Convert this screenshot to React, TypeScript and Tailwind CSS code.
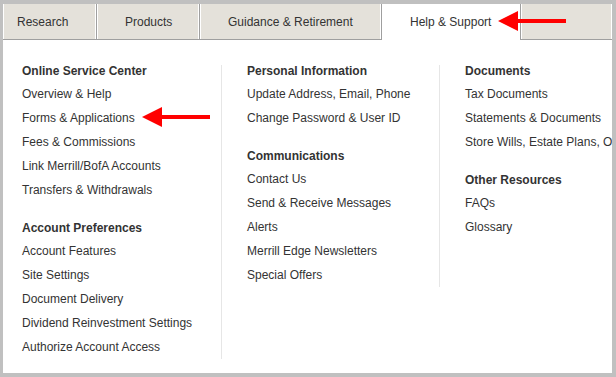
const tabs = [
  { label: 'Research', w: 'w-[93px] pl-[14px]', active: false },
  { label: 'Products', w: 'w-[103px] pl-[28px] border-l', active: false },
  { label: 'Guidance & Retirement', w: 'w-[182px] pl-[28px] border-l', active: false },
  { label: 'Help & Support', w: 'w-[139px] pl-[28px] border-l', active: true },
  { label: '', w: 'flex-1 border-l', active: false },
];

const columns = [
  {
    className: 'w-[219px] shrink-0 pl-[19px] border-r',
    sections: [
      {
        title: 'Online Service Center',
        links: ['Overview & Help', 'Forms & Applications', 'Fees & Commissions', 'Link Merrill/BofA Accounts', 'Transfers & Withdrawals'],
      },
      {
        title: 'Account Preferences',
        links: ['Account Features', 'Site Settings', 'Document Delivery', 'Dividend Reinvestment Settings', 'Authorize Account Access'],
      },
    ],
  },
  {
    className: 'w-[218px] shrink-0 pl-[25px] border-r',
    sections: [
      {
        title: 'Personal Information',
        links: ['Update Address, Email, Phone', 'Change Password & User ID'],
      },
      {
        title: 'Communications',
        links: ['Contact Us', 'Send & Receive Messages', 'Alerts', 'Merrill Edge Newsletters', 'Special Offers'],
      },
    ],
  },
  {
    className: 'flex-1 min-w-0 pl-[25px]',
    sections: [
      {
        title: 'Documents',
        links: ['Tax Documents', 'Statements & Documents', 'Store Wills, Estate Plans, Other Documents'],
      },
      {
        title: 'Other Resources',
        links: ['FAQs', 'Glossary'],
      },
    ],
  },
];

function Arrow() {
  return (
    <svg width="68" height="22" viewBox="0 0 68 22">
      <polygon points="0,11 20,1 20,21" fill="#ff0000" />
      <rect x="18" y="9" width="50" height="4" fill="#ff0000" />
    </svg>
  );
}

export default function App() {
  return (
    <div
      className="relative w-[616px] h-[377px] bg-[#c0c0c0] pt-[4px] pl-[3px] pr-[4px] pb-[4px] text-[12px] text-[#333]"
      style={{ fontFamily: '"Liberation Sans", Arial, sans-serif' }}
    >
      <div className="h-full bg-white overflow-hidden">
        {/* tab strip */}
        <div className="flex h-[36px]">
          {tabs.map((tab, i) => (
            <div
              key={i}
              className={`${tab.w} h-full flex items-center whitespace-nowrap border-[#9f9f9f] ${
                tab.active
                  ? 'bg-white'
                  : 'bg-[#e4e1da] border-b shadow-[inset_1px_0_0_#fff,inset_-1px_0_0_#fff]'
              }`}
            >
              {tab.label}
            </div>
          ))}
        </div>

        {/* menu columns */}
        <div className="flex items-start mt-[25px] whitespace-nowrap">
          {columns.map((col, i) => (
            <div key={i} className={`${col.className} border-[#e6e6e6]`}>
              <div className="-mt-[6px]">
                {col.sections.map((sec, j) => (
                  <div key={j} className={j > 0 ? 'mt-[14px]' : ''}>
                    <div className="h-[23px] leading-6 font-bold">{sec.title}</div>
                    {sec.links.map((link) => (
                      <div key={link} className="h-6 leading-6">
                        {link}
                      </div>
                    ))}
                  </div>
                ))}
              </div>
            </div>
          ))}
        </div>
      </div>

      {/* annotation arrows */}
      <div className="absolute left-[498px] top-[10px]">
        <Arrow />
      </div>
      <div className="absolute left-[142px] top-[106px]">
        <Arrow />
      </div>
    </div>
  );
}
